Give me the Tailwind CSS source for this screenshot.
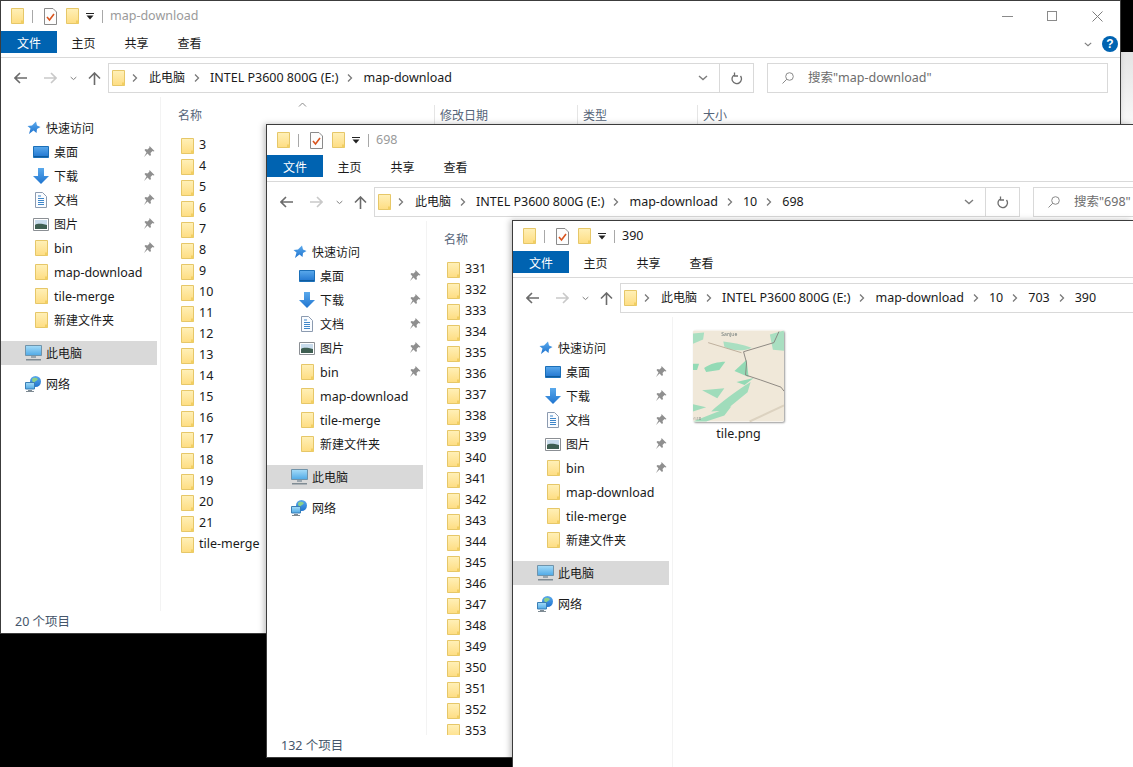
<!DOCTYPE html>
<html lang="zh-CN">
<head>
  <meta charset="UTF-8" />
  <title>map-download</title>
  <script src="https://cdn.jsdelivr.net/npm/@tailwindcss/browser@4"></script>
</head>
<body class="bg-black h-[767px] w-[1133px] overflow-hidden relative font-['Noto_Sans','Noto_Sans_CJK_SC',sans-serif] text-[12.5px] text-[#1a1a1a]">

  <!-- icon sprite -->
  <svg class="absolute w-0 h-0" width="0" height="0">
    <defs>
      <linearGradient id="fy" x1="0" y1="0" x2="0" y2="1"><stop offset="0" stop-color="#fff0b8"/><stop offset="1" stop-color="#fedd82"/></linearGradient>
      <linearGradient id="blue" x1="0" y1="0" x2="0" y2="1"><stop offset="0" stop-color="#5aa9ec"/><stop offset="1" stop-color="#1f74cf"/></linearGradient>
      <linearGradient id="screen" x1="0" y1="0" x2="0" y2="1"><stop offset="0" stop-color="#a5dcf8"/><stop offset="1" stop-color="#4fa9e6"/></linearGradient>
      <symbol id="folder" viewBox="0 0 13 16">
        <path d="M.5.5h12v15H.5z" fill="url(#fy)" stroke="#e6c768"/>
        <path d="M10 15.500v-3h2.500v3z" fill="#f2cf62"/>
      </symbol>
      <symbol id="check" viewBox="0 0 13 17">
        <path d="M.5.5h8.500l3.500 3.500v12.500H.5z" fill="#fdfdfd" stroke="#8a8a8a"/>
        <path d="M3 9l2.500 3L10 6" fill="none" stroke="#d9541e" stroke-width="1.600"/>
      </symbol>
      <symbol id="star" viewBox="0 0 14 14">
        <path d="M9 .5l1 4 3.500 1.500-3.500 2-.5 4-3-2.500-4.500 3.500 1.500-5.500L.5 5l4.500-.5z" fill="url(#blue)"/>
      </symbol>
      <symbol id="desktop" viewBox="0 0 16 12">
        <path d="M.5.5h15v11H.5z" fill="url(#blue)" stroke="#1b6fb8"/>
        <path d="M1 10h14v1H1z" fill="#0f5c9e"/>
      </symbol>
      <symbol id="down" viewBox="0 0 16 16">
        <path d="M5 0h6v8h5l-8 8-8-8h5z" fill="url(#blue)"/>
      </symbol>
      <symbol id="doc" viewBox="0 0 12 16">
        <path d="M.5.5h7l4 4v11H.5z" fill="#fafcff" stroke="#8c9bb0"/>
        <path d="M3 4h3M3 6.500h6M3 8.500h6M3 10.500h6M3 12.500h6" stroke="#3f86c9"/>
      </symbol>
      <symbol id="pic" viewBox="0 0 16 13">
        <path d="M.5.5h15v12H.5z" fill="#fff" stroke="#8b8f94"/>
        <path d="M2 2h12v5H2z" fill="#c9dcec"/>
        <path d="M2 7c3-2 7-1 12 0v4H2z" fill="#3f5f52"/>
      </symbol>
      <symbol id="pin" viewBox="0 0 12 12">
        <path d="M7 .5l4.500 4.500-1 .5-1-.5-2 2 .5 2-1 1-2.500-2.500L1 11l2.500-4.500L1.500 4l1-1 2 .5 2-2-.5-1z" fill="#8f8f8f"/>
      </symbol>
      <symbol id="pc" viewBox="0 0 17 16">
        <path d="M.5.5h16v10H.5z" fill="url(#screen)" stroke="#6f93aa"/>
        <path d="M6 11h5v2H6z" fill="#9aa5ad"/>
        <path d="M1 14h15v1.500H1z" fill="#7f8b93"/>
      </symbol>
      <symbol id="net" viewBox="0 0 17 16">
        <circle cx="10.500" cy="5.500" r="5.500" fill="url(#blue)"/>
        <path d="M7 3c2-2 4-1 6 0-1 2-3 2-4 4-1 0-2-2-2-4z" fill="#8ccf8a"/>
        <path d="M.5 6.500h9v6.500h-9z" fill="url(#screen)" stroke="#3b7fb5"/>
        <path d="M3 14h4v1H3z M1 15h8v1H1z" fill="#7f8b93"/>
      </symbol>
      <symbol id="chev" viewBox="0 0 6 10">
        <path d="M1 1.500L4.500 5 1 8.500" fill="none" stroke="#7a7a7a" stroke-width="1.300"/>
      </symbol>
      <symbol id="chevd" viewBox="0 0 10 6">
        <path d="M1 1l4 3.500L9 1" fill="none" stroke="#7d7d7d" stroke-width="1.400"/>
      </symbol>
    </defs>
  </svg>

  <!-- sliver of another window behind -->
  <div class="absolute left-[1120px] top-[52px] w-[13px] h-[80px] bg-linear-to-b from-[#e4e4e4] to-[#fbfbfb]"></div>

  <div id="desk"></div>

  <script>
    const icon = (id, cls) => `<svg class="${cls} shrink-0"><use href="#${id}"/></svg>`;
    const folder = icon('folder', 'w-[13px] h-4');
    const navFolder = `<span class="ml-[2px]">${folder}</span>`;

    function navRow(ic, label, pinned, cjk) {
      return `<div class="h-6 flex items-center pl-[32px] relative">
        <span class="w-[21px] flex justify-start">${ic}</span>
        <span class="${cjk ? 'text-[12px]' : ''} pt-[2px] whitespace-nowrap">${label}</span>
        ${pinned ? icon('pin', 'w-3 h-3 absolute left-[142px] top-[6px]') : ''}
      </div>`;
    }

    function navPane() {
      return `<div class="w-[159px] shrink-0 pt-[19px]">
        <div class="h-6 flex items-center pl-[26px]">
          <span class="w-[19px]">${icon('star', 'w-[14px] h-[14px]')}</span><span class="text-[12px] pt-[2px]">快速访问</span>
        </div>
        ${navRow(icon('desktop', 'w-4 h-3'), '桌面', true, true)}
        ${navRow(icon('down', 'w-4 h-4'), '下载', true, true)}
        ${navRow(icon('doc', 'w-3 h-4 ml-[2px]'), '文档', true, true)}
        ${navRow(icon('pic', 'w-4 h-[13px]'), '图片', true, true)}
        ${navRow(navFolder, 'bin', true)}
        ${navRow(navFolder, 'map-download')}
        ${navRow(navFolder, 'tile-merge')}
        ${navRow(navFolder, '新建文件夹', false, true)}
        <div class="mt-[9px] h-6 w-[156px] bg-[#d9d9d9] flex items-center pl-6">
          <span class="w-[21px]">${icon('pc', 'w-[17px] h-4')}</span><span class="text-[12px] pt-[2px]">此电脑</span>
        </div>
        <div class="mt-[7px] h-6 flex items-center pl-6">
          <span class="w-[21px]">${icon('net', 'w-[17px] h-4')}</span><span class="text-[12px] pt-[2px]">网络</span>
        </div>
      </div>`;
    }

    function listPane(items) {
      const rows = items.map(n => `<div class="h-[21px] flex items-center pl-[20px] gap-[5px]">${folder}<span class="whitespace-nowrap">${n}</span></div>`).join('');
      return `<div class="flex-1 min-w-0 border-l border-[#f3f3f3] overflow-hidden">
        <div class="h-[38px] flex items-center relative text-[12px] text-[#566579]">
          <div class="w-[273px] pl-[17px]">名称</div>
          <div class="w-[143px] h-[23px] flex items-center border-l border-[#e5e5e5] pl-[5px]">修改日期</div>
          <div class="w-[120px] h-[23px] flex items-center border-l border-[#e5e5e5] pl-[5px]">类型</div>
          <div class="w-[100px] h-[23px] flex items-center border-l border-[#e5e5e5] pl-[5px]">大小</div>
          <svg class="absolute left-[137px] top-[5px] w-[9px] h-[5px]" viewBox="0 0 9 5"><path d="M1 4.500L4.500 1 8 4.500" fill="none" stroke="#8a8a8a"/></svg>
        </div>
        ${rows}
      </div>`;
    }

    function iconPane() {
      return `<div class="flex-1 min-w-0 border-l border-[#f3f3f3] pl-[20px] pt-[13px]">
        <div class="w-[91px] flex flex-col items-center">
          <div class="w-[91px] h-[92px] overflow-hidden shadow-[1px_1px_2px_rgba(0,0,0,0.4)] rounded-[2px]">
            <svg class="w-[91px] h-[92px] blur-[0.6px]" viewBox="0 0 90 90">
              <rect width="90" height="90" fill="#f0e8d9"/>
              <path d="M30 11c9 1 19 3 28 6-8 4-20 3-27-1z M76 4l14-4v20l-11-1z M0 3l11-1-1 7-10 4z" fill="#a9dfc1"/>
              <path d="M41 40l12-11 2 17z M11 37c6-4 14-6 21-6l-6 8-13 2z M0 33l6 0-2 6-4 0z M43 51l17-4-9 7z" fill="#93dab5"/>
              <path d="M9 59l22-2-7 10z M18 80c10-9 24-20 39-29l-3 10-22 18z M0 73l13 3-13 4z M0 90l38-15-7 9-18 6z" fill="#a0dcbb"/>
              <path d="M50 21l30-9 5-11 M50 21l3 11-1 12 15 5 20 7 3 4" fill="none" stroke="#85807b" stroke-width="0.900"/>
              <path d="M15 12l33 10" fill="none" stroke="#b3a38f" stroke-width="0.800"/>
              <path d="M56 90l34-16" fill="none" stroke="#dcd2c0" stroke-width="2"/>
              <text x="28" y="5" font-size="5" fill="#6f7a78">Sanjue</text>
              <text x="0" y="89" font-size="4" fill="#8b8b8b">©28</text>
            </svg>
          </div>
          <div class="mt-[3px] leading-[18px]">tile.png</div>
        </div>
      </div>`;
    }

    function crumbs(parts) {
      return parts.map((p, i) => `<span class="${i < 1 ? 'text-[12px]' : ''} whitespace-nowrap">${p}</span>` +
        (i < parts.length - 1 ? icon('chev', 'w-[6px] h-[10px] ml-[9px] mr-[10px]') : '')).join('');
    }

    function win(o) {
      const controls = o.full ? `<div class="ml-auto flex items-center">
            <span class="w-[11px] h-px bg-[#8a8a8a]"></span>
            <span class="w-[10px] h-[10px] border border-[#8a8a8a] ml-[34px]"></span>
            <svg class="w-[11px] h-[11px] ml-[35px] mr-[17px]" viewBox="0 0 11 11"><path d="M.5.500l10 10M10.500.500l-10 10" stroke="#7d7d7d"/></svg>
          </div>` : '';
      const help = o.full ? `<div class="ml-auto flex items-center h-[22px] mt-[2px]">
            ${icon('chevd', 'w-2 h-[5px] mr-[10px]')}
            <div class="w-4 h-4 rounded-full bg-[#0063b1] text-white text-[12px] font-bold flex items-center justify-center mr-[2px] font-['Liberation_Sans']">?</div>
          </div>` : '';
      return `<div class="absolute ${o.pos} bg-white border border-[#3c3c3c] shadow-[-2px_0_6px_rgba(0,0,0,0.25)] flex flex-col overflow-hidden">
        <div class="h-[30px] shrink-0 flex items-center pl-[10px]">
          ${folder}
          <span class="w-px h-[13px] bg-[#a8a8a8] ml-2"></span>
          ${icon('check', 'w-[13px] h-[17px] ml-[11px]')}
          <span class="ml-[9px]">${folder}</span>
          <svg class="ml-[7px] w-2 h-[7px]" viewBox="0 0 8 7"><path d="M0 .5h8" stroke="#222"/><path d="M.5 2.500h7L4 6.500z" fill="#222"/></svg>
          <span class="w-px h-[13px] bg-[#a8a8a8] ml-[8px]"></span>
          <span class="ml-[7px] ${o.active ? 'text-[#1a1a1a]' : 'text-[#9a9a9a]'}">${o.title}</span>
          ${controls}
        </div>
        <div class="h-[27px] shrink-0 flex border-b border-[#d9d9d9] text-[12px]">
          <div class="w-[56px] h-[22px] pt-[4px] bg-[#0063b1] text-white flex items-center justify-center">文件</div>
          <div class="w-[53px] h-[22px] pt-[4px] flex items-center justify-center">主页</div>
          <div class="w-[53px] h-[22px] pt-[4px] flex items-center justify-center">共享</div>
          <div class="w-[53px] h-[22px] pt-[4px] flex items-center justify-center">查看</div>
          ${help}
        </div>
        <div class="h-[39px] shrink-0 flex pt-[5px]">
          <div class="w-[107px] h-[30px] flex items-center pl-[13px] shrink-0">
            <svg class="w-[13px] h-[12px]" viewBox="0 0 13 12"><path d="M6 1L1 6l5 5M1 6h12" fill="none" stroke="#6b6b6b" stroke-width="1.600"/></svg>
            <svg class="w-[13px] h-[12px] ml-[17px]" viewBox="0 0 13 12"><path d="M7 1l5 5-5 5M12 6H0" fill="none" stroke="#c9c9c9" stroke-width="1.600"/></svg>
            ${icon('chevd', 'w-[7px] h-[5px] ml-[13px]')}
            <svg class="w-[13px] h-[13px] ml-[11px]" viewBox="0 0 13 13"><path d="M1 6.500l5.500-5.500 5.500 5.500M6.500 1v12" fill="none" stroke="#6b6b6b" stroke-width="1.600"/></svg>
          </div>
          <div class="w-[646px] h-[30px] shrink-0 border border-[#d9d9d9] flex items-center">
            <div class="flex-1 min-w-0 flex items-center pl-[3px] overflow-hidden">
              ${folder}${icon('chev', 'w-[6px] h-[10px] ml-[7px] mr-[11px]')}${crumbs(o.crumbs)}
            </div>
            <div class="w-[32px] flex justify-center">${icon('chevd', 'w-[10px] h-[6px]')}</div>
            <div class="w-[34px] h-full border-l border-[#d9d9d9] flex items-center justify-center">
              <svg class="w-[12px] h-[13px]" viewBox="0 0 12 13"><path d="M9.500 4A4.700 4.700 0 1 1 4 2.500M3.500.500V4H7" fill="none" stroke="#6e6e6e" stroke-width="1.300"/></svg>
            </div>
          </div>
          <div class="ml-[13px] w-[341px] h-[30px] shrink-0 border border-[#d9d9d9] flex items-center pl-[14px] text-[#6d6d6d]">
            <svg class="w-[12px] h-[12px] shrink-0" viewBox="0 0 12 12"><circle cx="7.500" cy="4.500" r="3.800" fill="none" stroke="#8a8a8a"/><path d="M4.800 7.200L.5 11.500" stroke="#8a8a8a"/></svg>
            <span class="ml-[14px] whitespace-nowrap">搜索"${o.title}"</span>
          </div>
        </div>
        <div class="flex-1 min-h-0 flex">
          ${navPane()}
          ${o.main}
        </div>
        ${o.status ? `<div class="h-[22px] shrink-0 flex items-center pl-[14px] text-[#45566b]">${o.status}</div>` : ''}
      </div>`;
    }

    const range = (a, b) => Array.from({ length: b - a + 1 }, (_, i) => String(a + i));
    const base = ['此电脑', 'INTEL P3600 800G (E:)', 'map-download'];

    document.getElementById('desk').innerHTML =
      win({ pos: 'left-0 top-0 w-[1121px] h-[634px]', full: true, title: 'map-download', crumbs: base, status: '20 个项目',
            main: listPane([...range(3, 21), 'tile-merge']) }) +
      win({ pos: 'left-[266px] top-[124px] w-[867px] h-[634px] border-r-0', title: '698', crumbs: [...base, '10', '698'], status: '132 个项目',
            main: listPane(range(331, 353)) }) +
      win({ pos: 'left-[512px] top-[220px] w-[621px] h-[547px] border-r-0 border-b-0', title: '390', active: true, crumbs: [...base, '10', '703', '390'],
            main: iconPane() });
  </script>
</body>
</html>
